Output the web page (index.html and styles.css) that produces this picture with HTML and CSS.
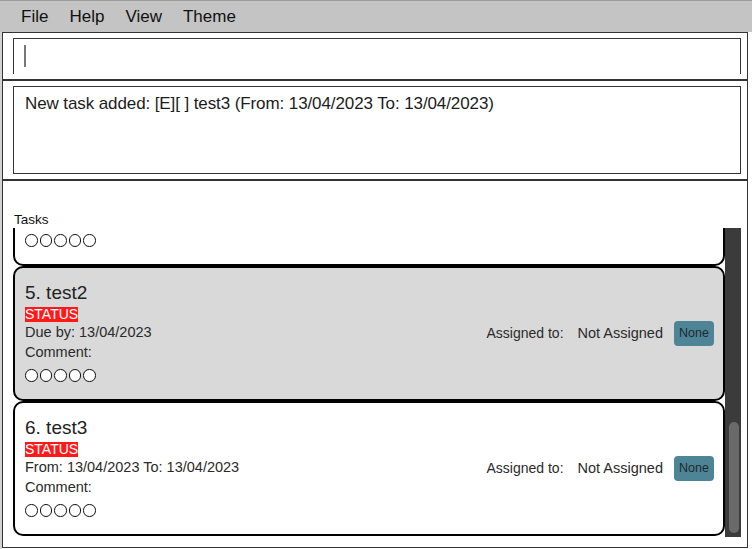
FILE: index.html
```html
<!DOCTYPE html>
<html>
<head>
<meta charset="utf-8">
<link rel="stylesheet" href="styles.css">
</head>
<body>
<div class="app">
  <div class="menubar">
    <span class="menu-item">File</span>
    <span class="menu-item">Help</span>
    <span class="menu-item">View</span>
    <span class="menu-item">Theme</span>
  </div>
  <div class="main-wrap">
    <div class="main">
      <div class="cmd-section">
        <div class="cmd-box"><span class="caret"></span></div>
      </div>
      <div class="sep"></div>
      <div class="result-section">
        <div class="result-box">New task added: [E][ ] test3 (From: 13/04/2023 To: 13/04/2023)</div>
      </div>
      <div class="sep"></div>
      <div class="tasks-section">
        <div class="tasks-label">Tasks</div>
        <div class="list-wrap">
          <div class="list">
            <div class="card-tail">
              <div class="circles"><span></span><span></span><span></span><span></span><span></span></div>
            </div>
            <div class="card card-grey">
              <div class="card-left">
                <div class="title">5. test2</div>
                <div class="status-row"><span class="status">STATUS</span></div>
                <div class="line">Due by: 13/04/2023</div>
                <div class="line">Comment:</div>
                <div class="circles"><span></span><span></span><span></span><span></span><span></span></div>
              </div>
              <div class="card-right">
                <span class="assigned-label">Assigned to:</span>
                <span class="assigned-value">Not Assigned</span>
                <span class="tag">None</span>
              </div>
            </div>
            <div class="card">
              <div class="card-left">
                <div class="title">6. test3</div>
                <div class="status-row"><span class="status">STATUS</span></div>
                <div class="line">From: 13/04/2023 To: 13/04/2023</div>
                <div class="line">Comment:</div>
                <div class="circles"><span></span><span></span><span></span><span></span><span></span></div>
              </div>
              <div class="card-right">
                <span class="assigned-label">Assigned to:</span>
                <span class="assigned-value">Not Assigned</span>
                <span class="tag">None</span>
              </div>
            </div>
          </div>
          <div class="scrollbar"><div class="thumb"></div></div>
        </div>
      </div>
    </div>
  </div>
</div>
</body>
</html>
```
FILE: styles.css
```css
* { box-sizing: border-box; }
html, body { margin: 0; padding: 0; background: #fff; }
body {
  font-family: "Liberation Sans", Arial, sans-serif;
  color: #222;
  width: 752px;
  height: 549px;
  overflow: hidden;
}
.app {
  width: 752px;
  height: 549px;
  display: flex;
  flex-direction: column;
}
.menubar {
  height: 32px;
  flex: none;
  border-top: 1px solid #9c9c9c;
  background: #c4c4c4;
  display: flex;
  align-items: center;
  padding-left: 21px;
  gap: 21px;
  font-size: 17px;
  color: #111;
}
.menu-item { line-height: 20px; padding-top: 1px; }
.main-wrap {
  flex: 1;
  display: flex;
  border-left: 2px solid #d2d2d2;
  padding-right: 4px;
  padding-bottom: 1px;
}
.main {
  flex: 1;
  border: 1px solid #333;
  display: flex;
  flex-direction: column;
  min-height: 0;
}
.cmd-section {
  height: 46px;
  flex: none;
  padding: 5px 6px 0 10px;
  overflow: hidden;
}
.cmd-box {
  height: 36px;
  border: 1px solid #333;
  border-bottom: none;
  padding: 6px 0 0 10px;
}
.caret {
  display: block;
  width: 2px;
  height: 22px;
  background: #777;
}
.sep {
  height: 2px;
  flex: none;
  background: #333;
}
.result-section {
  height: 98px;
  flex: none;
  padding: 5px 6px 5px 10px;
}
.result-box {
  height: 88px;
  border: 1px solid #333;
  padding: 7px 0 0 11px;
  font-size: 17px;
  line-height: 20px;
  letter-spacing: -0.1px;
  color: #1c1c1c;
}
.tasks-section {
  flex: 1;
  display: flex;
  flex-direction: column;
  min-height: 0;
  padding: 31px 6px 0 10px;
}
.tasks-label {
  font-size: 13.5px;
  line-height: 16px;
  padding-left: 1px;
  color: #111;
}
.list-wrap {
  height: 309px;
  flex: none;
  display: flex;
}
.list {
  flex: 1;
  overflow: hidden;
  background: #fff;
}
.card-tail {
  height: 38px;
  border: 2px solid #000;
  border-top: none;
  border-radius: 0 0 10px 10px;
  background: #fff;
  padding: 6px 0 0 10px;
}
.card-tail .circles { margin-top: 0; }
.card {
  height: 135px;
  border: 2px solid #000;
  border-radius: 10px;
  background: #fff;
  display: flex;
  align-items: center;
  padding: 0 9px 0 10px;
}
.card-grey { background: #d9d9d9; }
.card-left {
  flex: 1;
  align-self: flex-start;
  padding-top: 13px;
}
.title {
  font-size: 19px;
  line-height: 24px;
  color: #222;
}
.status-row { height: 17px; padding-top: 2px; }
.status {
  display: inline-block;
  background: #ff1a1a;
  color: #fff;
  font-size: 14px;
  line-height: 15px;
  height: 15px;
  vertical-align: top;
}
.line {
  font-size: 14.5px;
  line-height: 20px;
  color: #2a2a2a;
}
.circles {
  display: flex;
  gap: 2px;
  margin-top: 7px;
}
.circles span {
  width: 12.5px;
  height: 12.5px;
  border: 1.2px solid #111;
  border-radius: 50%;
  background: #fff;
}
.card-right {
  display: flex;
  align-items: center;
  font-size: 14.5px;
  color: #2a2a2a;
  margin-top: -1px;
}
.assigned-label { margin-right: 14px; font-size: 14px; }
.assigned-value { margin-right: 11px; }
.tag {
  width: 40px;
  height: 25px;
  border-radius: 4px;
  background: #4e8596;
  color: #1d2a2e;
  font-size: 12.5px;
  display: flex;
  align-items: center;
  justify-content: center;
}
.scrollbar {
  width: 16px;
  flex: none;
  background: #3b3b3b;
  display: flex;
  flex-direction: column;
  justify-content: flex-end;
  padding: 0 2px 4px 4px;
}
.thumb {
  height: 111px;
  background: #6a6a6a;
  border-radius: 5px;
}
```
